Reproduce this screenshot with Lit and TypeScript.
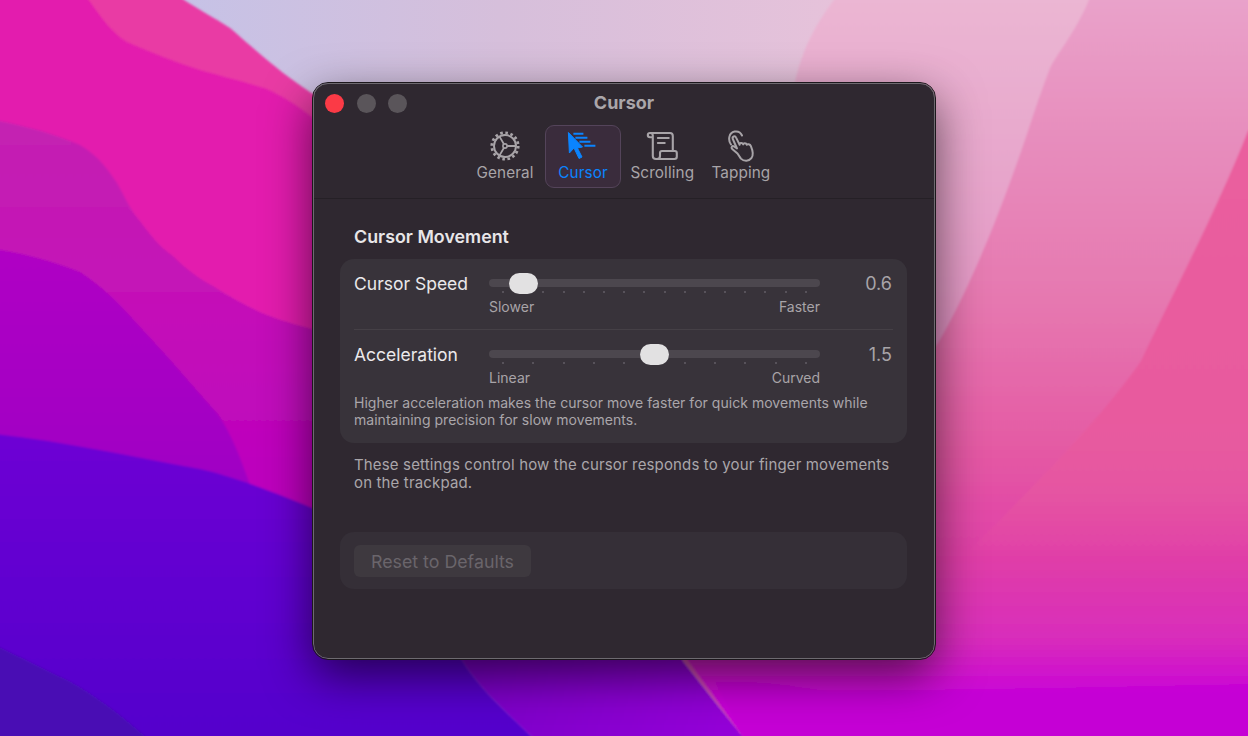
import { LitElement, html, css, svg } from 'lit'
import { customElement, state } from 'lit/decorators.js'

const wallpaper = svg`
  <svg class="wall" viewBox="0 0 1248 736" preserveAspectRatio="none">
    <defs>
      <linearGradient id="sky" x1="0" y1="0" x2="1" y2="0">
        <stop offset="0.15" stop-color="#c6c2e6" />
        <stop offset="0.4" stop-color="#d6bfdb" />
        <stop offset="0.67" stop-color="#e6c2da" />
      </linearGradient>
      <linearGradient id="ridge" gradientUnits="userSpaceOnUse" x1="0" y1="0" x2="0" y2="736">
        <stop offset="0" stop-color="#ebb6d3" />
        <stop offset="0.4" stop-color="#e49ac6" />
        <stop offset="1" stop-color="#d040b0" />
      </linearGradient>
      <linearGradient id="right" gradientUnits="userSpaceOnUse" x1="0" y1="0" x2="0" y2="736">
        <stop offset="0" stop-color="#e9a2ca" />
        <stop offset="0.2" stop-color="#e78cbc" />
        <stop offset="0.41" stop-color="#e678b0" />
        <stop offset="0.61" stop-color="#e45aa4" />
        <stop offset="0.76" stop-color="#e03ea8" />
        <stop offset="0.87" stop-color="#d82cbc" />
        <stop offset="0.95" stop-color="#c800d8" />
      </linearGradient>
      <linearGradient id="deep" gradientUnits="userSpaceOnUse" x1="0" y1="131" x2="0" y2="560">
        <stop offset="0" stop-color="#ea5f9e" />
        <stop offset="0.65" stop-color="#e85a9e" />
        <stop offset="1" stop-color="#e85a9e" stop-opacity="0" />
      </linearGradient>
      <linearGradient id="m2" gradientUnits="userSpaceOnUse" x1="0" y1="120" x2="0" y2="500">
        <stop offset="0" stop-color="#c422b2" />
        <stop offset="0.5" stop-color="#c410b8" />
        <stop offset="1" stop-color="#bc00be" />
      </linearGradient>
      <linearGradient id="m3" gradientUnits="userSpaceOnUse" x1="0" y1="249" x2="0" y2="480">
        <stop offset="0" stop-color="#b000c4" />
        <stop offset="1" stop-color="#a000c4" />
      </linearGradient>
      <linearGradient id="m4" gradientUnits="userSpaceOnUse" x1="0" y1="434" x2="0" y2="736">
        <stop offset="0" stop-color="#6e00d4" />
        <stop offset="1" stop-color="#5400cc" />
      </linearGradient>
      <linearGradient id="low" gradientUnits="userSpaceOnUse" x1="480" y1="660" x2="720" y2="736">
        <stop offset="0" stop-color="#7c00c8" />
        <stop offset="1" stop-color="#9400d8" />
      </linearGradient>
      <filter id="soft"><feGaussianBlur stdDeviation="0.8" /></filter>
    </defs>
    <rect width="1248" height="736" fill="url(#sky)" />
    <g filter="url(#soft)">
      <path d="M838 -5 C805 35 785 85 790 160 L682 660 L746 741 L1255 741 L1255 -5 Z" fill="url(#ridge)" />
      <path d="M1091 -5 C1078 28 1060 50 1051 66 C1045 80 1035 110 1028 131 C1001 211 971 286 938 343 L680 650 L746 741 L1255 741 L1255 -5 Z" fill="url(#right)" />
      <path d="M1255 125 L1248 131 C1218 207 1181 277 1141 361 C1100 420 1040 480 960 560 L1255 560 Z" fill="url(#deep)" />
      <path d="M715 682 C770 680 800 688 830 692 C900 690 1000 690 1255 684 L1255 741 L746 741 Z" fill="#c400d4" opacity="0.8" />
      <path d="M440 620 L700 620 L682 660 L746 741 L536 741 C510 715 480 690 462 660 Z" fill="url(#low)" />
      <path d="M-5 -5 L177 -5 C195 8 215 18 230 28 C250 45 285 78 320 98 L320 560 L-5 560 Z" fill="#e93aa4" />
      <path d="M-5 -5 L85 -5 C100 15 110 32 127 42 C150 52 175 62 200 70 C225 77 245 82 267 89 C285 97 305 110 320 124 L320 560 L-5 560 Z" fill="#e31eae" />
      <path d="M-5 120 C30 127 55 134 80 145 C100 157 108 170 117 183 C125 197 130 210 140 221 C150 235 160 247 173 256 C185 268 198 278 213 286 C230 297 250 308 267 315 C285 322 305 327 320 331 L320 560 L-5 560 Z" fill="url(#m2)" />
      <path d="M-5 249 C30 255 55 262 80 272 C100 285 118 302 133 319 C150 338 165 353 180 371 C195 388 205 400 217 413 C228 428 238 450 250 485 L-5 485 Z" fill="url(#m3)" />
      <path d="M-5 434 C60 441 130 456 200 469 C240 478 285 497 320 511 L440 620 L462 660 C480 690 510 715 536 741 L-5 741 Z" fill="url(#m4)" />
      <path d="M-5 645 C20 657 45 670 67 680 C95 695 125 718 150 741 L-5 741 Z" fill="#4a10b4" />
    </g>
  </svg>
`

const gearIcon = svg`
  <svg class="ic" viewBox="0 0 32 32">
    <circle cx="16" cy="16" r="13.2" fill="none" stroke="currentColor" stroke-width="2.8" stroke-dasharray="2.59 2.59" />
    <circle cx="16" cy="16" r="11" fill="none" stroke="currentColor" stroke-width="1.9" />
    <circle cx="16" cy="16" r="2.1" fill="none" stroke="currentColor" stroke-width="1.6" />
    <path d="M18.1 16 H27 M15 14.2 L10.4 6.4 M15 17.8 L10.4 25.6" fill="none" stroke="currentColor" stroke-width="1.8" />
  </svg>
`

const cursorIcon = svg`
  <svg class="ic" viewBox="0 0 32 32">
    <path d="M1.4 2.5 L2.4 23 L7 18 L12 28.5 L15 27 L10.4 18 L15.5 17 Z" fill="currentColor" stroke="currentColor" stroke-width="1" stroke-linejoin="round" />
    <path d="M6.4 3.7 H16.4 M8.4 7.7 H20.4 M12.4 11.7 H23.4 M17.4 15.7 H28.4" fill="none" stroke="currentColor" stroke-width="2" />
  </svg>
`

const scrollIcon = svg`
  <svg class="ic" viewBox="0 0 32 32">
    <path d="M4 3 H24 Q26.8 3 26.8 6 V21 M6.8 5.5 V26 Q6.8 29 10 29 H28.5 Q30.8 29 30.8 26.8 V23 Q30.8 21 28.8 21 H16 Q14 21 14 23 V26 Q14 29 11 29 M4 3 Q1.8 3 1.8 5.1 Q1.8 7.3 4 7.3 H6.8 M4 3 Q6.8 3 6.8 5.5" fill="none" stroke="currentColor" stroke-width="2.1" stroke-linejoin="round" stroke-linecap="round" />
    <path d="M11.8 8 H22.8 M11.8 13 H18.8" fill="none" stroke="currentColor" stroke-width="1.9" stroke-linecap="round" />
  </svg>
`

const tapIcon = svg`
  <svg class="ic" viewBox="0 0 32 32">
    <path d="M6 14.5 C2.6 9.5 4 2.8 9.6 1.6 C13 1 15.8 2.6 17 5.5" fill="none" stroke="currentColor" stroke-width="2" stroke-linecap="round" />
    <path d="M12.5 23.5 L7.2 19 C5.6 17.6 7.2 15.3 9 16.5 L12 18.5 L7.8 9 C6.8 6.6 10 5.2 11.1 7.6 L14.6 14.8 C14.4 12.8 17.4 12.4 18.2 14.4 C18.4 12.8 21.2 12.8 21.9 14.8 C22.4 13.8 25 14 25.9 16.2 C28 21.2 28.8 25.2 26.4 28.2 C24 31.4 19 31.7 15.9 28.6 Z" fill="none" stroke="currentColor" stroke-width="2" stroke-linejoin="round" stroke-linecap="round" />
  </svg>
`

@customElement('app-root')
export class AppRoot extends LitElement {
  static override styles = css`
    :host {
      display: block;
      position: relative;
      width: 1248px;
      height: 736px;
      overflow: hidden;
      font-family: Inter, 'Liberation Sans', sans-serif;
    }

    .wall {
      position: absolute;
      inset: 0;
      width: 100%;
      height: 100%;
    }

    .window {
      position: absolute;
      left: 313px;
      top: 83px;
      width: 622px;
      height: 576px;
      box-sizing: border-box;
      background: #2f2830;
      border: 1px solid #6e6a70;
      outline: 1px solid #1c181c;
      border-radius: 15px;
      box-shadow: 0 16px 48px rgba(0, 0, 0, 0.62);
      display: flex;
      flex-direction: column;
    }

    .titlebar {
      position: relative;
      box-sizing: border-box;
      height: 41px;
      padding-bottom: 4px;
      flex-shrink: 0;
      display: flex;
      align-items: center;
      justify-content: center;
      font-size: 18px;
      font-weight: 700;
      color: #aaa6aa;
    }

    .lights {
      position: absolute;
      left: 11px;
      top: 10px;
      display: flex;
      gap: 12.5px;
    }
    .lights span {
      width: 19px;
      height: 19px;
      border-radius: 50%;
      background: #5a555a;
    }
    .lights span:first-child {
      background: #fb3a46;
    }

    .toolbar {
      height: 74px;
      flex-shrink: 0;
      box-sizing: border-box;
      display: flex;
      justify-content: center;
      padding-right: 2px;
      border-bottom: 1px solid #252026;
    }

    .tabs {
      display: flex;
      gap: 2.6px;
      height: 63px;
    }

    .tab {
      box-sizing: border-box;
      width: 76px;
      height: 63px;
      padding-top: 4px;
      border: 1px solid transparent;
      border-radius: 9px;
      display: flex;
      flex-direction: column;
      align-items: center;
      font-size: 15.3px;
      line-height: 19px;
      color: #a8a4a8;
      letter-spacing: 0.1px;
      white-space: nowrap;
    }
    .tab.active {
      margin: 0 0.7px 0 -0.7px;
      color: #0a84ff;
      background: #3a2c3c;
      border-color: #54445a;
    }

    .ic {
      width: 32px;
      height: 32px;
      margin-bottom: 1px;
      flex-shrink: 0;
    }

    .content {
      flex: 1;
      padding: 26px 27px 0 26px;
      display: flex;
      flex-direction: column;
    }

    h2 {
      margin: 1px 0 11px 14px;
      font-size: 17.85px;
      line-height: 22px;
      font-weight: 600;
      color: #e8e6e8;
    }

    .card {
      background: #38333a;
      border-radius: 14px;
      padding: 12px 14px 15px;
    }

    .row {
      display: grid;
      grid-template-columns: 135px 331px 1fr;
      align-items: start;
    }
    .row + .row {
      margin-top: 13px;
      padding-top: 12px;
      border-top: 1px solid #454046;
    }

    .label {
      padding-top: 1px;
      font-size: 17.5px;
      line-height: 24px;
      color: #ebe9eb;
    }

    .value {
      padding: 1px 1px 0 0;
      font-size: 18px;
      line-height: 24px;
      color: #a8a4a8;
      text-align: right;
    }

    .slider {
      position: relative;
      padding-top: 8px;
    }

    .track {
      height: 8px;
      border-radius: 4px;
      background: #4c474e;
    }

    .thumb {
      position: absolute;
      top: 1.5px;
      width: 29px;
      height: 21px;
      margin-left: -14.5px;
      border-radius: 10.5px;
      background: #e2e1e2;
    }

    .ticks {
      display: flex;
      justify-content: space-between;
      padding: 4px 13px 0;
    }
    .ticks i {
      width: 2px;
      height: 2px;
      background: #57525a;
    }

    .ends {
      display: flex;
      justify-content: space-between;
      margin-top: 5px;
      font-size: 14px;
      line-height: 18px;
      color: #a8a4a8;
    }

    .hint {
      margin: 7px 0 0;
      font-size: 14px;
      line-height: 17px;
      color: #aaa6aa;
      letter-spacing: 0.03px;
    }

    .note {
      margin: 13px 14px 0;
      font-size: 15px;
      line-height: 18px;
      color: #aaa6aa;
      letter-spacing: 0.15px;
    }

    .reset {
      margin-top: 40px;
      background: #352f37;
      border-radius: 14px;
      padding: 13px 14px 12px;
    }

    button {
      display: block;
      width: 177px;
      height: 32px;
      padding: 0;
      border: none;
      border-radius: 6px;
      background: #3e393f;
      font: inherit;
      font-size: 17.8px;
      color: #6a656b;
    }
  `

  @state() sliders = [
    { label: 'Cursor Speed', value: '0.6', pos: 34, ticks: 16, low: 'Slower', high: 'Faster' },
    { label: 'Acceleration', value: '1.5', pos: 165.5, ticks: 11, low: 'Linear', high: 'Curved' },
  ]

  override render() {
    return html`
      ${wallpaper}
      <div class="window">
        <div class="titlebar">
          <div class="lights"><span></span><span></span><span></span></div>
          Cursor
        </div>
        <div class="toolbar">
          <div class="tabs">
            <div class="tab">${gearIcon}General</div>
            <div class="tab active">${cursorIcon}Cursor</div>
            <div class="tab">${scrollIcon}Scrolling</div>
            <div class="tab">${tapIcon}Tapping</div>
          </div>
        </div>
        <div class="content">
          <h2>Cursor Movement</h2>
          <div class="card">
            ${this.sliders.map(
              (s) => html`
                <div class="row">
                  <div class="label">${s.label}</div>
                  <div class="slider">
                    <div class="track"></div>
                    <div class="thumb" style="left: ${s.pos}px"></div>
                    <div class="ticks">
                      ${Array.from({ length: s.ticks }, () => html`<i></i>`)}
                    </div>
                    <div class="ends"><span>${s.low}</span><span>${s.high}</span></div>
                  </div>
                  <div class="value">${s.value}</div>
                </div>
              `
            )}
            <p class="hint">
              Higher acceleration makes the cursor move faster for quick movements while
              maintaining precision for slow movements.
            </p>
          </div>
          <p class="note">
            These settings control how the cursor responds to your finger movements on the
            trackpad.
          </p>
          <div class="reset"><button disabled>Reset to Defaults</button></div>
        </div>
      </div>
    `
  }
}

declare global {
  interface HTMLElementTagNameMap {
    'app-root': AppRoot
  }
}
